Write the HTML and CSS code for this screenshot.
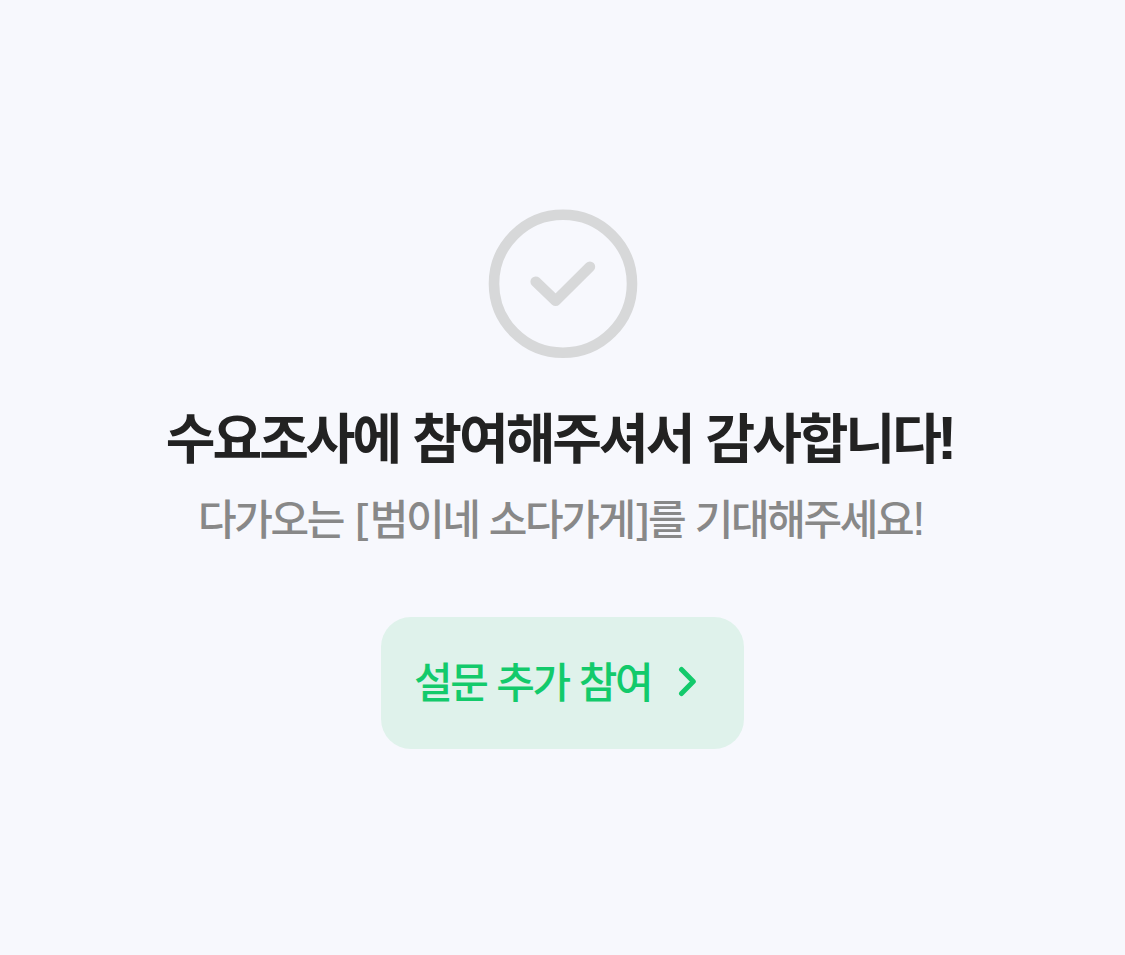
FILE: index.html
```html
<!DOCTYPE html>
<html lang="ko">
<head>
<meta charset="utf-8">
<title>설문 완료</title>
<link rel="stylesheet" href="styles.css">
</head>
<body>
<main class="complete">
  <svg class="check" viewBox="0 0 150 150" fill="none" stroke="#d7d8d9" stroke-width="10.6" stroke-linecap="round" stroke-linejoin="round" aria-hidden="true">
    <circle cx="75" cy="74.7" r="69"/>
    <path d="M47.7 72.7L67.7 91.8L101.9 57.8"/>
  </svg>
  <h1 class="title">수요조사에 참여해주셔서 감사합니다<span class="mark">!</span></h1>
  <p class="subtitle">다가오는 <span class="bracket open">[</span>범이네 소다가게<span class="bracket">]</span>를 기대해주세요<span class="mark">!</span></p>
  <a class="button" href="#">
    <span class="button-text">설문 추가 참여</span>
    <svg class="arrow" viewBox="0 0 20 32" fill="none" stroke="#13ca6b" stroke-width="5" stroke-linecap="round" stroke-linejoin="round" aria-hidden="true"><path d="M3.5 3.5L15.3 15.5L3.5 27.5"/></svg>
  </a>
</main>
</body>
</html>
```
FILE: styles.css
```css
body {
  margin: 0;
  background: #f7f8fd;
  font-family: "Noto Sans CJK KR", sans-serif;
}
.complete {
  box-sizing: border-box;
  height: 955px;
  padding-top: 209px;
  display: flex;
  flex-direction: column;
  align-items: center;
}
.check { width: 150px; height: 150px; flex: none; }
.title {
  margin: 41px 5px 0 0;
  font-size: 54px;
  line-height: 72px;
  font-weight: 700;
  letter-spacing: -3px;
  word-spacing: 1px;
  color: #222;
  white-space: nowrap;
}
.subtitle {
  margin: 17px 4px 0 0;
  font-size: 42px;
  line-height: 56px;
  font-weight: 500;
  letter-spacing: -2.4px;
  word-spacing: 1px;
  color: #888;
  white-space: nowrap;
}
.mark { font-family: "Liberation Sans", sans-serif; font-size: 1.13em; line-height: 0; margin-left: -2px; }
.subtitle .mark { margin-left: 0; }
.bracket {
  display: inline-block;
  font-family: Inter, sans-serif;
  font-size: 42px;
  font-weight: 400;
  line-height: 1;
  margin-left: 1px;
  letter-spacing: -2px;
  transform: scaleX(1.2);
}
.open { margin: 0 3px 0 0; transform-origin: 3px 50%; }
.button {
  box-sizing: border-box;
  width: 363px;
  height: 132px;
  margin-top: 72px;
  padding: 0 46px 2px 33px;
  border-radius: 30px;
  display: flex;
  align-items: center;
  justify-content: space-between;
  background: #dff2eb;
  color: #13ca6b;
  font-size: 42px;
  font-weight: 500;
  letter-spacing: -2.4px;
  word-spacing: 0.5px;
  text-decoration: none;
  white-space: nowrap;
}
.button-text { padding-bottom: 6px; }
.arrow { width: 20px; height: 32px; flex: none; }
```
